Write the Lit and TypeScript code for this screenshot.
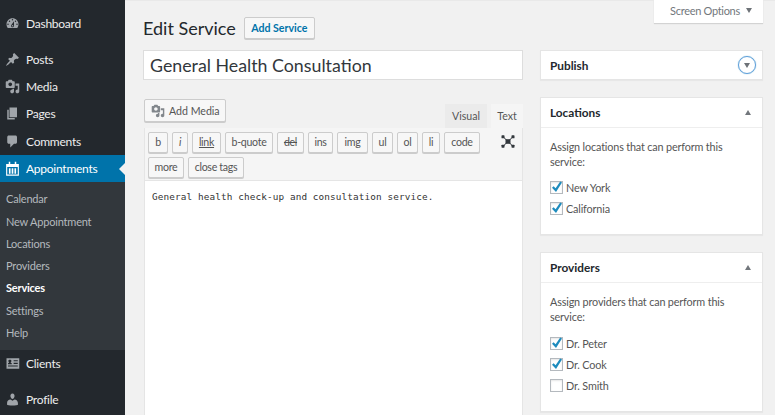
import { LitElement, html, css, svg } from "lit";
import { customElement } from "lit/decorators.js";

const ICONS: Record<string, any> = {
  dashboard: svg`<path d="M3.76 16h12.48c1.1-1.37 1.76-3.11 1.76-5 0-4.42-3.58-8-8-8s-8 3.58-8 8c0 1.89.66 3.63 1.76 5zM10 4c.55 0 1 .45 1 1s-.45 1-1 1-1-.45-1-1 .45-1 1-1zM6 6c.55 0 1 .45 1 1s-.45 1-1 1-1-.45-1-1 .45-1 1-1zm8 0c.55 0 1 .45 1 1s-.45 1-1 1-1-.45-1-1 .45-1 1-1zm-5.37 5.55L12 7v6c0 1.1-.9 2-2 2s-2-.9-2-2c0-.57.24-1.08.63-1.45zM4 10c.55 0 1 .45 1 1s-.45 1-1 1-1-.45-1-1 .45-1 1-1zm12 0c.55 0 1 .45 1 1s-.45 1-1 1-1-.45-1-1 .45-1 1-1zm-5 3c0-.55-.45-1-1-1s-1 .45-1 1 .45 1 1 1 1-.45 1-1z"/>`,
  pin: svg`<path d="M10.44 3.02l1.82-1.82 6.36 6.35-1.83 1.82c-1.05-.68-2.48-.57-3.41.36l-.75.75c-.92.93-1.04 2.35-.35 3.41l-1.83 1.82-2.41-2.41-2.8 2.79c-.42.42-3.38 2.71-3.8 2.29s1.86-3.39 2.28-3.81l2.79-2.79L4.1 9.36l1.83-1.82c1.05.69 2.48.57 3.4-.36l.75-.75c.93-.92 1.05-2.35.36-3.41z"/>`,
  media: svg`<path d="M13 11V4c0-.55-.45-1-1-1h-1.67L9 1H5L3.67 3H2c-.55 0-1 .45-1 1v7c0 .55.45 1 1 1h10c.55 0 1-.45 1-1zM7 4.5c1.38 0 2.5 1.12 2.5 2.5S8.38 9.5 7 9.5 4.5 8.38 4.5 7 5.62 4.5 7 4.5zM14 6h5v10.5c0 1.38-1.12 2.5-2.5 2.5S14 17.88 14 16.5s1.12-2.5 2.5-2.5c.17 0 .34.02.5.05V9h-3V6zm-4 8.05V13h2v3.5c0 1.38-1.12 2.5-2.5 2.5S7 17.88 7 16.5 8.12 14 9.5 14c.17 0 .34.02.5.05z"/>`,
  pages: svg`<path d="M6 15V2h10v13H6zm-1 1h8v2H3V5h2v11z"/>`,
  comments: svg`<path d="M5 2h9c1.1 0 2 .9 2 2v7c0 1.1-.9 2-2 2h-2l-5 5v-5H5c-1.1 0-2-.9-2-2V4c0-1.1.9-2 2-2z"/>`,
  calendar: svg`<path fill-rule="evenodd" d="M5 1h2v3h6V1h2v3h3.5v15.5h-17V4H5V1zM3 8v10h14V8H3z"/><path d="M5.2 9.5h2.2V17H5.2zM8.9 9.5h2.2V17H8.9zM12.6 9.5h2.2V17h-2.2z"/>`,
  id: svg`<path fill-rule="evenodd" d="M2 3h17v14H2V3zm9.5 2.5V7h5.5V5.5h-5.5zm0 3.5v1.5h5.5V9h-5.5zM4 12.5V14h13v-1.5H4zM4 9.8v1.2h5V9.8c-.6-.8-1.6-.9-1.6-1.4C8.300 7.800 8.500 7 8.500 6.200 8.500 5.400 7.500 5 6.500 5S4.500 5.400 4.500 6.200C4.500 7 4.700 7.800 5.600 8.400 5.600 8.900 4.600 9 4 9.800z"/>`,
  user: svg`<path d="M10 9.25c-2.27 0-2.73-3.44-2.73-3.44C7 4.02 7.82 2 9.97 2c2.16 0 2.98 2.02 2.71 3.81 0 0-.41 3.44-2.68 3.44zm0 2.57L12.72 10c2.39 0 4.52 2.33 4.52 4.53v2.49s-3.65 1.13-7.24 1.13c-3.65 0-7.24-1.13-7.24-1.13v-2.49c0-2.25 1.94-4.48 4.47-4.48z"/>`,
};
const icon = (n: string) => html`<svg class="mi" viewBox="0 0 20 20">${ICONS[n]}</svg>`;

@customElement("app-root")
export class AppRoot extends LitElement {
  static styles = css`
    :host { display: flex; width: 775px; height: 415px; overflow: hidden; background: #f1f1f1;
      font-family: "Lato", "Open Sans", sans-serif; color: #444; font-size: 11px; }
    * { box-sizing: border-box; }
    .side { width: 125px; flex: none; background: #23282d; padding-top: 10px; color: #eee; }
    .item { height: 27.25px; display: flex; align-items: center; padding: 0 0 1px 5px; gap: 6px; font-size: 12px; letter-spacing: -0.25px; position: relative; }
    .item.sep { margin-top: 9px; }
    .mi { width: 15px; height: 15px; fill: #a0a5aa; flex: none; }
    .item.active { background: #0073aa; color: #fff; height: 27px; }
    .item.active .mi { fill: #fff; }
    .item.active::after { content: ""; position: absolute; right: 0; top: 8px; border: 6px solid transparent; border-right-color: #f1f1f1; border-left-width: 0; }
    .sub { background: #32373c; padding: 6px 0; height: 168px; }
    .sub div { height: 22.3px; line-height: 22px; padding-left: 6px; font-size: 11px; letter-spacing: -0.2px; color: #b4b9be; }
    .sub .cur { color: #fff; font-weight: 700; }

    .main { flex: 1; display: flex; flex-direction: column; padding: 0 12px 0 18px; position: relative; min-width: 0; box-shadow: inset 0 1px 0 #e9e9e9; }
    .screen { position: absolute; top: 0; right: 12px; width: 109px; height: 23px; background: #fff; box-shadow: 0 1px 1px rgba(0,0,0,.12);
      display: flex; align-items: center; justify-content: center; gap: 6px; color: #72777c; font-size: 11px; letter-spacing: -0.3px; padding: 0 0 2px 5px; }
    .tri-d { width: 0; height: 0; border: 3.5px solid transparent; border-top: 5px solid #6e7378; border-bottom: 0; }
    .tri-u { width: 0; height: 0; border: 3.5px solid transparent; border-bottom: 5px solid #72777c; border-top: 0; }
    .head { display: flex; flex: none; align-items: center; height: 50px; padding-top: 5px; gap: 8px; }
    h1 { margin: 0; font-size: 18px; font-weight: 400; color: #23282d; }
    .addnew { height: 22px; width: 71px; border: 1px solid #ccc; border-radius: 2px; background: #f7f7f7; color: #0073aa; font-weight: 700; font-size: 10.6px;
      display: flex; align-items: center; justify-content: center; box-shadow: 0 1px 0 #ccc; }
    .cols { display: flex; flex: none; gap: 17px; align-items: flex-start; }
    .left { width: 380px; flex: none; }
    .right { width: 223px; flex: none; display: flex; flex-direction: column; gap: 17px; }
    .title { height: 30px; background: #fff; border: 1px solid #ddd; display: flex; align-items: center; padding: 0 6px; font-size: 17.8px; color: #32373c; }
    .media-row { display: flex; justify-content: space-between; align-items: flex-end; margin-top: 18px; height: 30px; }
    .media { width: 82px; height: 23px; margin: 0 0 6px 1px; border: 1px solid #ccc; border-radius: 2px; background: #f7f7f7; box-shadow: 0 1px 0 #ccc;
      display: flex; align-items: center; gap: 4px; padding-left: 6px; color: #555; font-size: 10.6px; }
    .media svg { width: 14px; height: 14px; fill: #82878c; flex: none; }
    .tabs { display: flex; gap: 4px; }
    .tab { height: 24px; display: flex; align-items: center; justify-content: center; font-size: 10.6px; color: #555; background: #ebebeb; width: 42px; }
    .tab.on { background: #f5f5f5; width: 32px; }
    .edit { margin-left: 1px; background: #f5f5f5; border: 1px solid #e5e5e5; border-top: 0; }
    .bar { height: 52px; padding: 4px 3px; position: relative; }
    .btns { display: flex; flex-wrap: wrap; gap: 3.6px 4px; width: 340px; align-content: flex-start; }
    .b { height: 21px; border: 1px solid #ccc; border-radius: 2px; background: #f7f7f7; box-shadow: 0 1px 0 #ccc; color: #555; font-size: 10.6px; letter-spacing: -0.3px;
      display: flex; align-items: center; justify-content: center; padding-bottom: 1px; }
    .fs { position: absolute; left: 356px; top: 7px; width: 14px; height: 13px; }
    .area { height: 240px; background: #fff; border-top: 1px solid #e5e5e5; padding: 10px 7px; font-family: "DejaVu Sans Mono", "Liberation Mono", monospace; font-size: 9.35px; letter-spacing: 0.12px; color: #333; }

    .box { background: #fff; border: 1px solid #e5e5e5; box-shadow: 0 1px 1px rgba(0,0,0,.04); }
    .bh { height: 28.5px; flex: none; display: flex; align-items: center; justify-content: space-between; padding: 0 11px 0 9px; font-size: 11.8px; font-weight: 700; color: #23282d; }
    .pub { height: 30px; }
    .pub .bh { height: 28px; }
    .ring { width: 18px; height: 18px; border: 1px solid #5b9dd9; border-radius: 50%; box-shadow: 0 0 1px rgba(30,140,190,.8); display: flex; align-items: center; justify-content: center; margin-right: -5px; }
    .bb { border-top: 1px solid #eee; padding: 11px 9px 0; }
    .bb p { margin: 0; font-size: 10.8px; letter-spacing: -0.15px; line-height: 15px; color: #555; }
    .checks { margin-top: 12px; display: flex; flex-direction: column; gap: 8px; }
    .ck { display: flex; align-items: center; gap: 3px; height: 13px; font-size: 10.8px; letter-spacing: -0.15px; color: #555; }
    .cb { width: 13px; height: 13px; border: 1px solid #b4b9be; background: #fff; box-shadow: inset 0 1px 2px rgba(0,0,0,.1); position: relative; flex: none; }
    .cb svg { position: absolute; left: 0; top: -1px; width: 12px; height: 12px; fill: #1e8cbe; }
    .loc { height: 138px; }
    .prov { height: 160px; }
    .prov .checks { margin-top: 13px; }
  `;

  private ck(label: string, on: boolean) {
    return html`<div class="ck"><span class="cb">${on ? html`<svg viewBox="0 0 12 12"><path d="M11 1.4L5 11 1 6.8l1.6-1.6 2 2 4.6-6.8z"/></svg>` : ""}</span>${label}</div>`;
  }

  render() {
    const btns: [string, number, string?][] = [
      ["b", 20], ["i", 16, "font-style:italic"], ["link", 29, "text-decoration:underline"], ["b-quote", 48],
      ["del", 27, "text-decoration:line-through"], ["ins", 25], ["img", 31], ["ul", 21], ["ol", 21], ["li", 18], ["code", 36],
      ["more", 36], ["close tags", 56],
    ];
    return html`
      <nav class="side">
        <div class="item">${icon("dashboard")}Dashboard</div>
        <div class="item sep">${icon("pin")}Posts</div>
        <div class="item">${icon("media")}Media</div>
        <div class="item">${icon("pages")}Pages</div>
        <div class="item">${icon("comments")}Comments</div>
        <div class="item active">${icon("calendar")}Appointments</div>
        <div class="sub">
          <div>Calendar</div><div>New Appointment</div><div>Locations</div><div>Providers</div>
          <div class="cur">Services</div><div>Settings</div><div>Help</div>
        </div>
        <div class="item">${icon("id")}Clients</div>
        <div class="item sep">${icon("user")}Profile</div>
      </nav>
      <main class="main">
        <div class="screen">Screen Options <span class="tri-d"></span></div>
        <div class="head"><h1>Edit Service</h1><div class="addnew">Add Service</div></div>
        <div class="cols">
          <section class="left">
            <div class="title">General Health Consultation</div>
            <div class="media-row">
              <div class="media"><svg viewBox="0 0 20 20">${ICONS.media}</svg>Add Media</div>
              <div class="tabs"><div class="tab">Visual</div><div class="tab on">Text</div></div>
            </div>
            <div class="edit">
              <div class="bar">
                <div class="btns">
                  ${btns.map(([t, w, s]) => html`<div class="b" style="width:${w}px;${s ?? ""}">${t}</div>`)}
                </div>
                <svg class="fs" viewBox="0 0 14 13"><path d="M2 1.700L12 11.300M12 1.700L2 11.300" stroke="#32373c" stroke-width="1" fill="none"/><g fill="#32373c"><rect x=".5" y=".3" width="3" height="3" rx=".6"/><rect x="10.500" y=".3" width="3" height="3" rx=".6"/><rect x=".5" y="9.700" width="3" height="3" rx=".6"/><rect x="10.500" y="9.700" width="3" height="3" rx=".6"/><rect x="4.500" y="4.200" width="5" height="4.600"/></g></svg>
              </div>
              <div class="area">General health check-up and consultation service.</div>
            </div>
          </section>
          <aside class="right">
            <div class="box pub"><div class="bh">Publish<span class="ring"><span class="tri-d"></span></span></div></div>
            <div class="box loc">
              <div class="bh">Locations<span class="tri-u"></span></div>
              <div class="bb">
                <p>Assign locations that can perform this service:</p>
                <div class="checks">${this.ck("New York", true)}${this.ck("California", true)}</div>
              </div>
            </div>
            <div class="box prov">
              <div class="bh">Providers<span class="tri-u"></span></div>
              <div class="bb">
                <p>Assign providers that can perform this service:</p>
                <div class="checks">${this.ck("Dr. Peter", true)}${this.ck("Dr. Cook", true)}${this.ck("Dr. Smith", false)}</div>
              </div>
            </div>
          </aside>
        </div>
      </main>
    `;
  }
}
